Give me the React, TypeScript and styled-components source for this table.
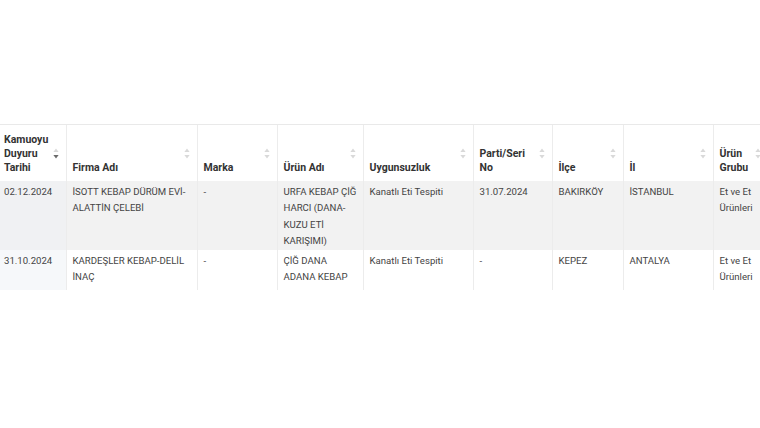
import React from 'react'
import styled, { createGlobalStyle } from 'styled-components'

const GlobalStyle = createGlobalStyle`
  html, body {
    margin: 0;
    padding: 0;
    background: #ffffff;
  }
  body {
    font-family: Roboto, "Liberation Sans", Arial, sans-serif;
  }
`

const Page = styled.div`
  width: 760px;
  height: 428px;
  overflow: hidden;
  padding-top: 124px;
  box-sizing: border-box;
`

const TableWrap = styled.div`
  width: 760px;
  overflow: hidden;
`

const Table = styled.table`
  margin-left: -3px;
  border-collapse: collapse;
  table-layout: fixed;
  width: 771px;
`

const HeadCell = styled.th<{ $w: number }>`
  width: ${({ $w }) => $w}px;
  height: 56px;
  box-sizing: border-box;
  padding: 7px 7px 6px 6px;
  border-top: 1px solid #e9e9e9;
  border-left: 1px solid #ececec;
  text-align: left;
  vertical-align: bottom;
  &:first-child {
    border-left: none;
    padding-left: 7px;
  }
`

const HeadInner = styled.div`
  display: flex;
  align-items: flex-end;
  height: 42px;
  gap: 4px;
`

const HeadLabel = styled.span`
  flex: 1;
  font-size: 10.5px;
  line-height: 14px;
  font-weight: 700;
  color: #333333;
`

const SortIcon = styled.svg`
  align-self: center;
  flex: none;
  width: 6px;
  height: 11px;
`

const Row = styled.tr<{ $alt: boolean }>`
  background: ${({ $alt }) => ($alt ? '#f2f2f2' : '#ffffff')};
  &:last-child td {
    padding-bottom: 4px;
  }
`

const Cell = styled.td<{ $sorted?: boolean; $alt?: boolean }>`
  padding: 3px 4px 0 6px;
  border-left: 1px solid #ececec;
  vertical-align: top;
  font-size: 9.6px;
  line-height: 16.5px;
  color: #444444;
  background: ${({ $sorted, $alt }) => ($sorted ? ($alt ? '#f0f1f3' : '#f6f8fa') : 'transparent')};
  &:first-child {
    border-left: none;
    padding-left: 7px;
  }
`

type SortState = 'none' | 'desc'

const Sort: React.FC<{ state: SortState }> = ({ state }) => (
  <SortIcon viewBox="0 0 6 11">
    <path d="M3 0.5 L5.6 4 L0.4 4 Z" fill="#d9d9d9" />
    <path d="M3 10.5 L5.6 7 L0.4 7 Z" fill={state === 'desc' ? '#6b6b6b' : '#d9d9d9'} />
  </SortIcon>
)

const columns = [
  { label: 'Kamuoyu Duyuru Tarihi', w: 69, sort: 'desc' as SortState },
  { label: 'Firma Adı', w: 131, sort: 'none' as SortState },
  { label: 'Marka', w: 80, sort: 'none' as SortState },
  { label: 'Ürün Adı', w: 86, sort: 'none' as SortState },
  { label: 'Uygunsuzluk', w: 110, sort: 'none' as SortState },
  { label: 'Parti/Seri No', w: 79, sort: 'none' as SortState },
  { label: 'İlçe', w: 71, sort: 'none' as SortState },
  { label: 'İl', w: 90, sort: 'none' as SortState },
  { label: 'Ürün Grubu', w: 55, sort: 'none' as SortState },
]

const rows = [
  [
    '02.12.2024',
    'İSOTT KEBAP DÜRÜM EVİ-ALATTİN ÇELEBİ',
    '-',
    'URFA KEBAP ÇİĞ HARCI (DANA-KUZU ETİ KARIŞIMI)',
    'Kanatlı Eti Tespiti',
    '31.07.2024',
    'BAKIRKÖY',
    'İSTANBUL',
    'Et ve Et Ürünleri',
  ],
  [
    '31.10.2024',
    'KARDEŞLER KEBAP-DELİL İNAÇ',
    '-',
    'ÇİĞ DANA ADANA KEBAP',
    'Kanatlı Eti Tespiti',
    '-',
    'KEPEZ',
    'ANTALYA',
    'Et ve Et Ürünleri',
  ],
]

const App: React.FC = () => {
  return (
    <Page>
      <GlobalStyle />
      <TableWrap>
        <Table>
          <thead>
            <tr>
              {columns.map((c) => (
                <HeadCell key={c.label} $w={c.w}>
                  <HeadInner>
                    <HeadLabel>{c.label}</HeadLabel>
                    <Sort state={c.sort} />
                  </HeadInner>
                </HeadCell>
              ))}
            </tr>
          </thead>
          <tbody>
            {rows.map((r, i) => (
              <Row key={i} $alt={i % 2 === 0}>
                {r.map((v, j) => (
                  <Cell key={j} $sorted={j === 0} $alt={i % 2 === 0}>
                    {v}
                  </Cell>
                ))}
              </Row>
            ))}
          </tbody>
        </Table>
      </TableWrap>
    </Page>
  )
}

export default App
